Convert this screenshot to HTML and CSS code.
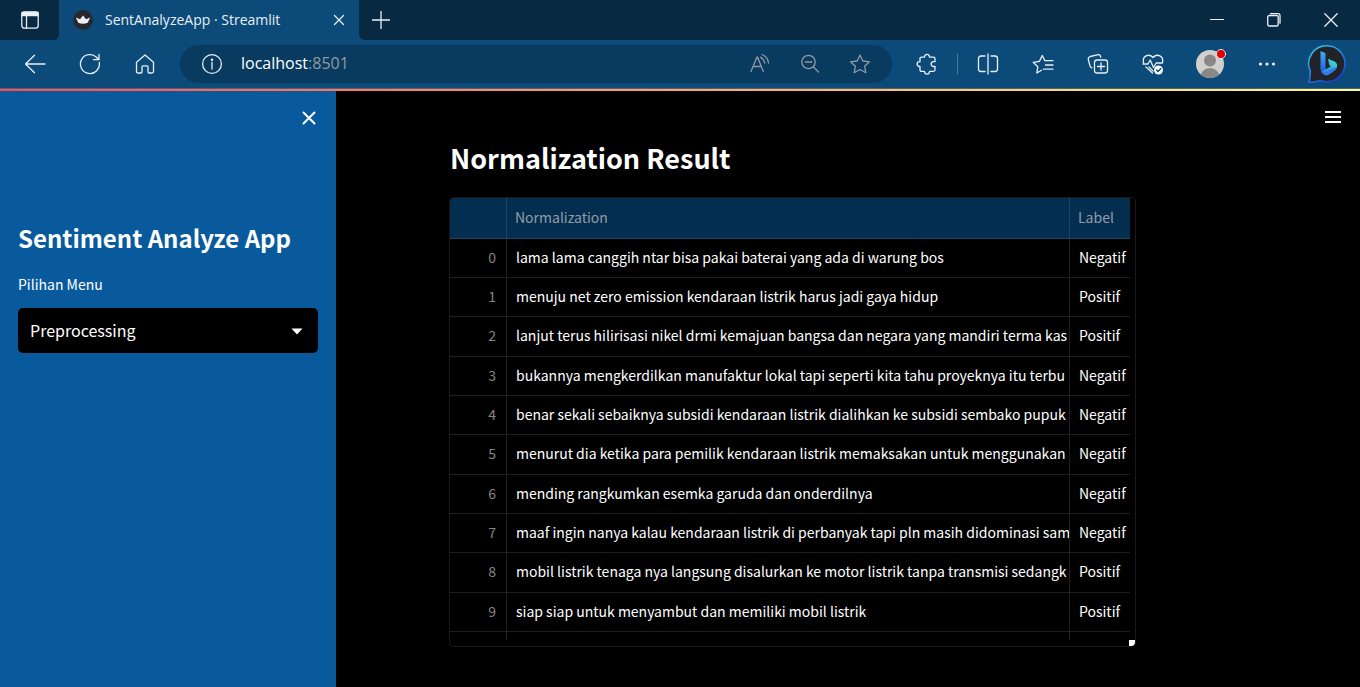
FILE: index.html
```html
<!DOCTYPE html>
<html lang="id">
<head>
<meta charset="utf-8">
<meta name="viewport" content="width=device-width, initial-scale=1">
<title>SentAnalyzeApp · Streamlit</title>
<link rel="stylesheet" href="styles.css">
</head>
<body>
<div class="browser">
  <header class="chrome">
    <div class="tabs">
      <button class="tab-menu" type="button" aria-label="Tab actions"><svg width="20" height="20" viewBox="0 0 20 20"><rect x="1.8" y="1.8" width="16.4" height="16.4" rx="2.6"/><path d="M2 2.5h16v3H2z" fill="currentColor"/><path d="M6.5 6v12"/></svg></button>
      <div class="tab">
        <svg class="favicon" width="20" height="20" viewBox="0 0 20 20"><circle cx="10" cy="10" r="10" fill="#262730" stroke="none"/><path d="M2.800 7.500l4.200 1.800L10 5.500l3 3.800 4.200-1.800-2.500 5.200q-4.700 2.200-9.400 0z" fill="#eee" stroke="none"/></svg>
        <span class="tab-title">SentAnalyzeApp · Streamlit</span>
        <button class="icon-btn" type="button" aria-label="Close tab"><svg width="12" height="12" viewBox="0 0 12 12"><path d="M1.500 1.500l9 9M10.500 1.500l-9 9"/></svg></button>
      </div>
      <button class="new-tab" type="button" aria-label="New tab"><svg width="18" height="18" viewBox="0 0 18 18"><path d="M9 .5v17M.5 9h17"/></svg></button>
      <div class="window-controls">
        <button class="icon-btn" type="button" aria-label="Minimize"><svg width="14" height="14" viewBox="0 0 14 14"><path d="M.5 6.500h13" stroke-width="1"/></svg></button>
        <button class="icon-btn" type="button" aria-label="Restore"><svg width="14" height="14" viewBox="0 0 14 14"><rect x=".7" y="2.500" width="10.500" height="10.500" rx="1.600"/><path d="M3.500.700H11a2 2 0 0 1 2 2v7.500"/></svg></button>
        <button class="icon-btn" type="button" aria-label="Close window"><svg width="14" height="14" viewBox="0 0 14 14"><path d="M.8.8l12.400 12.400M13.200.8L.8 13.200"/></svg></button>
      </div>
    </div>
    <div class="toolbar">
      <nav class="nav-buttons">
        <button class="icon-btn" type="button" aria-label="Back"><svg width="22" height="22" viewBox="0 0 22 22"><path d="M21 11H1.500M10.500 2.200L1.500 11l9 8.800"/></svg></button>
        <button class="icon-btn" type="button" aria-label="Refresh"><svg width="22" height="22" viewBox="0 0 22 22"><path d="M20.300 9.500A9.500 9.500 0 1 1 17.500 4.200l2 2.300M20 1.500v5.200h-5.500"/></svg></button>
        <button class="icon-btn" type="button" aria-label="Home"><svg width="22" height="22" viewBox="0 0 22 22"><path d="M2.500 9.200L11 1.900l8.500 7.300v9.300q0 1.500-1.500 1.500h-3q-1 0-1-1.200v-5q0-1-1-1h-4q-1 0-1 1v5q0 1.200-1 1.200H4q-1.500 0-1.500-1.500z"/></svg></button>
      </nav>
      <div class="address">
        <svg width="22" height="22" viewBox="0 0 22 22"><circle cx="11" cy="11" r="9.400"/><path d="M11 9.500V16"/><circle cx="11" cy="6.700" r=".6" fill="currentColor"/></svg>
        <div class="url">localhost<span class="port">:8501</span></div>
        <div class="address-actions">
          <button class="icon-btn" type="button" aria-label="Read aloud"><svg width="22" height="22" viewBox="0 0 22 22"><path d="M2 18.500L8 4h.5l5.800 14.500M4.200 13.500h8M11.500 4.200q3.300 1.500 4.200 6M13 1.500q6 2.200 6.500 8.500"/></svg></button>
          <button class="icon-btn" type="button" aria-label="Zoom out"><svg width="22" height="22" viewBox="0 0 22 22"><circle cx="9.500" cy="9" r="6.700"/><path d="M6.300 9h6.500M14.500 14l5 5"/></svg></button>
          <button class="icon-btn" type="button" aria-label="Add to favorites"><svg width="22" height="22" viewBox="0 0 22 22"><path d="M11 2l2.800 6 6.700.8-4.900 4.500 1.300 6.500L11 16.500l-5.900 3.300 1.300-6.500L1.500 8.800 8.200 8z"/></svg></button>
        </div>
      </div>
      <div class="tools">
        <button class="icon-btn" type="button" aria-label="Extensions"><svg width="22" height="22" viewBox="0 0 22 22"><path d="M5.500 4.200H8.300q.3 0 .3-.5a2.400 2.400 0 0 1 4.800 0q0 .5.300.5h3.800q1.500 0 1.500 1.500v3h-1.500a2.400 2.400 0 0 0 0 4.800H19v3.300q0 1.500-1.500 1.500h-3.800q-.3 0-.3.500a2.400 2.400 0 0 1-4.800 0q0-.5-.3-.5H5.500Q4 18.300 4 16.800v-3.300h-.5a2.400 2.400 0 0 1 0-4.800H4v-3q0-1.500 1.500-1.500"/></svg></button>
        <span class="divider"></span>
        <button class="icon-btn" type="button" aria-label="Split screen"><svg width="22" height="22" viewBox="0 0 22 22"><path d="M11 1v20M8 3H4Q1.500 3 1.500 5.500v10.500Q1.500 18.500 4 18.500h4M14 3h4q2.500 0 2.500 2.500v10.500q0 2.500-2.500 2.500h-4"/></svg></button>
        <button class="icon-btn" type="button" aria-label="Favorites"><svg width="22" height="22" viewBox="0 0 22 22"><path d="M9.500 17.200L4.800 20l1-6.200L1.200 9.300l6.200-.9L10.300 2.500l2.500 5.200H21M13.500 12H21M11.500 16.200H21"/></svg></button>
        <button class="icon-btn" type="button" aria-label="Collections"><svg width="22" height="22" viewBox="0 0 22 22"><rect x="7.500" y="7" width="13" height="13" rx="2.500"/><path d="M14 10v7M10.500 13.500h7M5 14.800q-1.500-.2-2-1.800L1.300 6.500q-.3-2.300 2-3L11.200 1.700q2-.2 2.600 2.500"/></svg></button>
        <button class="icon-btn" type="button" aria-label="Browser essentials"><svg width="22" height="22" viewBox="0 0 22 22"><path d="M1.500 9.500Q.5 4.500 4 2.800q4-1.700 7 1.700 3-3.400 7-1.700 3.500 1.700 2.500 6.700M1 11h5l2.200-4 3.300 7.500L14.200 10H20.500M4 14l6.500 6M7 14l4 4"/><circle cx="16.500" cy="17" r="4.500" fill="#fff" stroke="none"/><path d="M14.500 17l1.500 1.500 2.800-3" stroke="#0c4a79"/></svg></button>
        <button class="icon-btn profile" type="button" aria-label="Profile"><svg width="32" height="32" viewBox="0 0 32 32"><defs><clipPath id="face"><circle cx="15" cy="16" r="14"/></clipPath></defs><g clip-path="url(#face)" stroke="none"><path d="M0 0h32v32H0z" fill="#d2d0ce"/><circle cx="15" cy="12.500" r="6" fill="#8a8886"/><circle cx="15" cy="30" r="10" fill="#8a8886"/></g><circle cx="26" cy="6" r="4.600" fill="#e00000" stroke="#fff" stroke-width=".8"/></svg></button>
        <button class="icon-btn" type="button" aria-label="Settings and more"><svg width="22" height="22" viewBox="0 0 22 22"><g fill="currentColor" stroke="none"><circle cx="4.500" cy="11" r="1.600"/><circle cx="11" cy="11" r="1.600"/><circle cx="17.500" cy="11" r="1.600"/></g></svg></button>
        <button class="icon-btn bing" type="button" aria-label="Bing chat"><svg width="40" height="40" viewBox="0 0 40 40"><defs><linearGradient id="ring" x1="0" y1="0" x2=".6" y2="1"><stop stop-color="#32d5ed"/><stop offset="1" stop-color="#1746d2"/></linearGradient><linearGradient id="stem" x1="0" y1="0" x2="0" y2="1"><stop stop-color="#36b5f2"/><stop offset="1" stop-color="#2556e6"/></linearGradient><linearGradient id="bowl" x1="1" y1="0" x2="0" y2="1"><stop stop-color="#3ce6c8"/><stop offset="1" stop-color="#2877f4"/></linearGradient></defs><path d="M20 1.700a18 18 0 1 1-6.500 34.800Q9 38.200 2 38.200 3.500 33 3.200 27A18 18 0 0 1 20 1.700z" fill="#222328" stroke="url(#ring)" stroke-width="1.600"/><path d="M13.500 7l5 2.300v19L13.500 26z" fill="url(#stem)" stroke="none"/><path d="M21 14.800l7 3q2.500 1.500 2 5-.4 2.500-3.500 4.400L20 31.500l-6-3.500q0-1 4-2.500l6-3-1.700-1.200z" fill="url(#bowl)" stroke="none"/><path d="M14 27l4.500 1 8-4q2-1.500 3 0-1 2.500-4 4.200-6 4.300-9 2.300z" fill="#3478f0" stroke="none"/></svg></button>
      </div>
    </div>
  </header>
  <div class="decoration"></div>
  <div class="app">
    <aside class="sidebar">
      <div class="sidebar-top"><button class="icon-btn" type="button" aria-label="Close sidebar"><svg width="14" height="14" viewBox="0 0 14 14"><path d="M1.500 1.500l11 11M12.500 1.500l-11 11" stroke-width="2"/></svg></button></div>
      <h2 class="app-title">Sentiment Analyze App</h2>
      <label class="field-label" for="menu">Pilihan Menu</label>
      <div class="select-wrap">
        <select class="select" id="menu"><option>Preprocessing</option></select>
        <svg class="caret" width="12" height="7" viewBox="0 0 12 7"><path d="M.5.500h11L6 6.500z" fill="currentColor" stroke="none"/></svg>
      </div>
    </aside>
    <main class="main">
      <div class="menu-bar"><button class="icon-btn" type="button" aria-label="Main menu"><svg width="18" height="14" viewBox="0 0 18 14"><path d="M1 2h16M1 7h16M1 12h16" stroke-width="1.800" stroke-linecap="butt"/></svg></button></div>
      <div class="content">
        <h1 class="page-title">Normalization Result</h1>
        <div class="frame">
          <table class="data">
            <colgroup><col class="col-index"><col class="col-text"><col class="col-label"></colgroup>
            <thead><tr><th></th><th>Normalization</th><th>Label</th></tr></thead>
            <tbody>
              <tr><td>0</td><td>lama lama canggih ntar bisa pakai baterai yang ada di warung bos</td><td>Negatif</td></tr>
              <tr><td>1</td><td>menuju net zero emission kendaraan listrik harus jadi gaya hidup</td><td>Positif</td></tr>
              <tr><td>2</td><td>lanjut terus hilirisasi nikel drmi kemajuan bangsa dan negara yang mandiri terma kas</td><td>Positif</td></tr>
              <tr><td>3</td><td>bukannya mengkerdilkan manufaktur lokal tapi seperti kita tahu proyeknya itu terbu</td><td>Negatif</td></tr>
              <tr><td>4</td><td>benar sekali sebaiknya subsidi kendaraan listrik dialihkan ke subsidi sembako pupuk</td><td>Negatif</td></tr>
              <tr><td>5</td><td>menurut dia ketika para pemilik kendaraan listrik memaksakan untuk menggunakan</td><td>Negatif</td></tr>
              <tr><td>6</td><td>mending rangkumkan esemka garuda dan onderdilnya</td><td>Negatif</td></tr>
              <tr><td>7</td><td>maaf ingin nanya kalau kendaraan listrik di perbanyak tapi pln masih didominasi sam</td><td>Negatif</td></tr>
              <tr><td>8</td><td>mobil listrik tenaga nya langsung disalurkan ke motor listrik tanpa transmisi sedangk</td><td>Positif</td></tr>
              <tr><td>9</td><td>siap siap untuk menyambut dan memiliki mobil listrik</td><td>Positif</td></tr>
              <tr class="cut-row"><td></td><td></td><td></td></tr>
            </tbody>
          </table>
          <span class="resize-handle"></span>
        </div>
      </div>
    </main>
  </div>
</div>
</body>
</html>
```
FILE: styles.css
```css
* { box-sizing: border-box; }

body {
  margin: 0;
  background: #000;
  color: #fff;
  font-family: "Noto Sans CJK SC", sans-serif;
}

button {
  border: 0;
  padding: 0;
  background: none;
  color: inherit;
  font: inherit;
}

svg {
  display: block;
  flex: none;
  fill: none;
  stroke: currentColor;
  stroke-width: 1.3;
  stroke-linecap: round;
  stroke-linejoin: round;
}

.browser {
  display: flex;
  flex-direction: column;
  min-height: 100vh;
}

.icon-btn {
  display: flex;
  align-items: center;
  justify-content: center;
}

/* Browser frame */
.chrome {
  background: #0c4a79;
  color: #e8eff5;
  font-family: "Open Sans", sans-serif;
}

.tabs {
  display: flex;
  height: 40px;
  background: #0c4a79;
}

.tab-menu {
  display: flex;
  align-items: center;
  justify-content: center;
  width: 59px;
  background: #072942;
  border-bottom-right-radius: 6px;
}

.tab {
  display: flex;
  align-items: center;
  gap: 12px;
  width: 300px;
  padding: 0 14px;
}

.tab-title {
  flex: 1;
  padding-bottom: 2px;
  font-size: 14px;
  white-space: nowrap;
}

.new-tab {
  display: flex;
  align-items: center;
  width: 60px;
  padding-left: 13px;
  background: #072942;
  border-bottom-left-radius: 6px;
}

.window-controls {
  display: flex;
  flex: 1;
  align-items: center;
  justify-content: flex-end;
  gap: 43px;
  padding-right: 22px;
  background: #072942;
}

.toolbar {
  display: flex;
  align-items: center;
  height: 48px;
}

.nav-buttons {
  display: flex;
  gap: 33px;
  padding: 0 24px;
}

.address {
  display: flex;
  flex: 1;
  align-items: center;
  height: 38px;
  padding: 0 21px;
  border-radius: 19px;
  background: #093a5f;
}

.url {
  flex: 1;
  padding: 0 0 2px 18px;
  font-size: 16px;
  color: #fff;
}

.port,
.address-actions { color: #8f9aa3; }

.address-actions {
  display: flex;
  gap: 28px;
}

.tools {
  display: flex;
  align-items: center;
  gap: 33px;
  padding: 0 13px 0 24px;
}

.divider {
  width: 1px;
  height: 20px;
  margin: 0 -14px;
  background: #4b7ba0;
}

.profile { margin: 0 -4px 0 -2px; }

.bing { margin-left: -4px; }

.decoration {
  height: 3px;
  border-top: 1px solid #40678a;
  background: linear-gradient(90deg, #ff4b4b, #fffd80);
}

/* Application */
.app {
  display: flex;
  flex: 1;
}

.sidebar {
  width: 336px;
  padding: 0 18px;
  background: #085a9d;
}

.sidebar-top {
  display: flex;
  justify-content: flex-end;
  padding: 20px 2px 0 0;
}

.app-title {
  margin: 92px 0 0;
  font-size: 24px;
  line-height: 42px;
  font-weight: 600;
}

.field-label {
  display: block;
  margin-top: 15px;
  font-size: 14px;
  line-height: 20px;
}

.select-wrap {
  position: relative;
  margin-top: 14px;
}

.select {
  width: 100%;
  height: 45px;
  padding: 0 12px 2px;
  border: 0;
  border-radius: 5px;
  appearance: none;
  background: #000;
  color: #fff;
  font: 16px "Noto Sans CJK SC", sans-serif;
}

.caret {
  position: absolute;
  top: 20px;
  right: 15px;
  pointer-events: none;
}

.main {
  flex: 1;
  min-width: 0;
}

.menu-bar {
  display: flex;
  justify-content: flex-end;
  padding: 19px 18px 0 0;
}

.content {
  max-width: 796px;
  margin: 0 auto;
}

.page-title {
  margin: 12px 0 17px;
  font-size: 27px;
  line-height: 44px;
  font-weight: 600;
}

.frame {
  position: relative;
  width: 687px;
  max-width: 100%;
  margin-left: -1px;
  padding: 0 5px 6px 0;
  border: 1px solid #1a1a1c;
  border-radius: 5px;
  overflow: hidden;
}

.data {
  width: 100%;
  table-layout: fixed;
  border-spacing: 0;
  font-size: 14px;
  line-height: 20px;
}

.col-index { width: 57px; }
.col-label { width: 60px; }

.data th,
.data td {
  height: 39px;
  padding: 0 0 3px 9px;
  border-bottom: 1px solid #1f1f21;
  border-right: 1px solid #1f1f21;
  overflow: hidden;
  text-align: left;
  white-space: nowrap;
}

.data th {
  height: 41px;
  padding: 0 0 2px 8px;
  background: #042e50;
  border-color: #1d4566;
  color: #929ca6;
  font-weight: 400;
}

.data tr :last-child { border-right: 0; }

.data td:first-child {
  padding-right: 10px;
  color: #858587;
  text-align: right;
}

.data tr:nth-child(3n) td { height: 40px; }

.data .cut-row td {
  height: 8px;
  padding: 0;
  border-bottom: 0;
}

.resize-handle {
  position: absolute;
  right: 0;
  bottom: 0;
  width: 6px;
  height: 6px;
  background: #fff;
}
```
